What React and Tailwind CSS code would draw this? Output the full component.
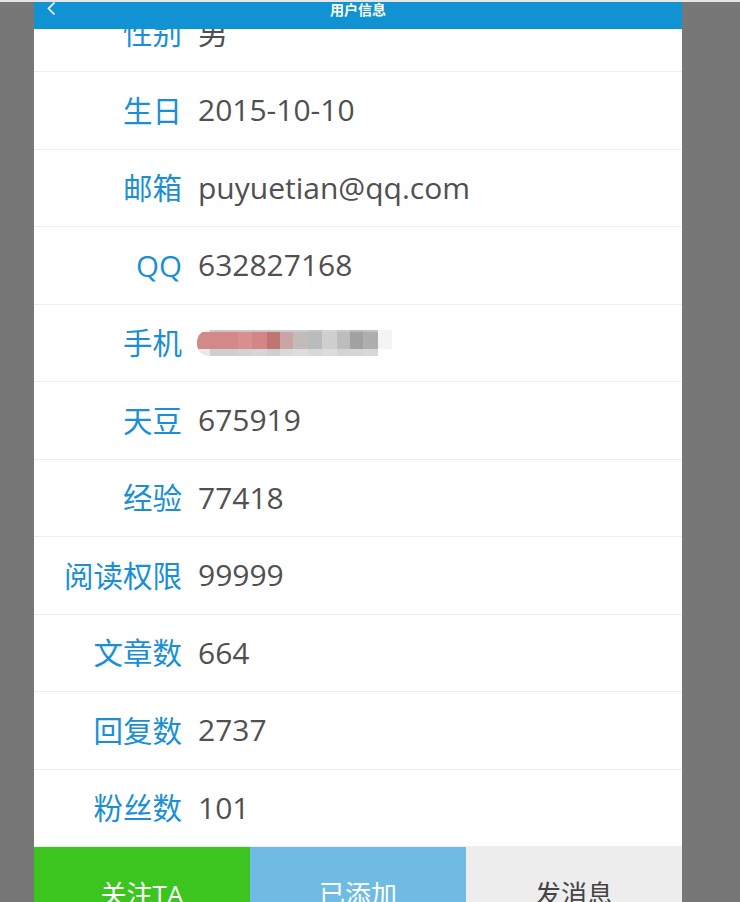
import React from "react";

const rows = [
  ["性别", "男"],
  ["生日", "2015-10-10"],
  ["邮箱", "puyuetian@qq.com"],
  ["QQ", "632827168"],
  ["手机", null],
  ["天豆", "675919"],
  ["经验", "77418"],
  ["阅读权限", "99999"],
  ["文章数", "664"],
  ["回复数", "2737"],
  ["粉丝数", "101"],
];

const mosaic = [
  { w: 13, top: "bg-[#ececec]", mid: "bg-[#d08a8a]", bot: "bg-[#e8e8e8]", first: true },
  { w: 28, top: "bg-[#c8c8c8]", mid: "bg-[#d48888]", bot: "bg-[#cfcfcf]" },
  { w: 14, top: "bg-[#c8c8c8]", mid: "bg-[#d98f8f]", bot: "bg-[#d2d2d2]" },
  { w: 15, top: "bg-[#c8c8c8]", mid: "bg-[#d48585]", bot: "bg-[#d6d6d6]" },
  { w: 13, top: "bg-[#c6c6c6]", mid: "bg-[#c07575]", bot: "bg-[#cfcfcf]" },
  { w: 13, top: "bg-[#cccccc]", mid: "bg-[#c9a5a5]", bot: "bg-[#dadada]" },
  { w: 15, top: "bg-[#cccccc]", mid: "bg-[#c3baba]", bot: "bg-[#dedede]" },
  { w: 14, top: "bg-[#c4c4c4]", mid: "bg-[#b8bcbe]", bot: "bg-[#d8d8d8]" },
  { w: 15, top: "bg-[#d4d4d4]", mid: "bg-[#cfcfcf]", bot: "bg-[#dcdcdc]" },
  { w: 13, top: "bg-[#c8c8c8]", mid: "bg-[#bdbdbd]", bot: "bg-[#d4d4d4]" },
  { w: 13, top: "bg-[#bcbcbc]", mid: "bg-[#a3a0a0]", bot: "bg-[#d6d6d6]" },
  { w: 15, top: "bg-[#c2c2c2]", mid: "bg-[#b0aeac]", bot: "bg-[#d8d8d8]" },
  { w: 14, top: "bg-[#f3f4f6]", mid: "bg-[#f3f4f6]", bot: "bg-white" },
];

function Mosaic() {
  return (
    <div className="flex ml-[15px] h-[26px]">
      {mosaic.map((m, i) => (
        <div
          key={i}
          className={"flex flex-col " + (m.first ? "rounded-l-[12px] overflow-hidden" : "")}
          style={{ width: m.w }}
        >
          <div className={"h-[2px] " + m.top} />
          <div className={"h-[17px] " + m.mid} />
          <div className={"h-[7px] " + m.bot} />
        </div>
      ))}
    </div>
  );
}

export default function App() {
  return (
    <div className="w-full h-[902px] overflow-hidden bg-[#777777] font-['Open_Sans','Noto_Sans_CJK_SC',sans-serif]">
      <div className="h-[2px] bg-[#e6e6e6]" />
      <div className="w-[648px] ml-[34px] bg-white">
        <div className="relative h-[27px] bg-[#1192d3] z-10">
          <svg className="absolute left-[12px] top-0" width="12" height="14" viewBox="0 0 12 14">
            <path d="M8.5 0.5 L2.5 6.5 L8.5 12.5" fill="none" stroke="white" strokeWidth="1.6" />
          </svg>
          <div className="text-center text-white font-bold text-[14px] leading-[14px] pt-0 font-['Noto_Sans_CJK_SC',sans-serif]">
            用户信息
          </div>
        </div>
        <div className="mt-[-34.5px]">
          {rows.map(([label, value], i) => (
            <div key={i} className="h-[77.5px] border-b border-[#ededed] flex items-center">
              <div className="w-[148px] text-right text-[29.5px] text-[#1a8fd5] leading-none">{label}</div>
              {value === null ? (
                <Mosaic />
              ) : (
                <div className="ml-[16px] text-[30px] text-[#505050] leading-none">{value}</div>
              )}
            </div>
          ))}
        </div>
        <div className="grid grid-cols-3 h-[94px] text-[26px] leading-none">
          <div className="bg-[#3cc51f] text-white flex items-center justify-center">关注TA</div>
          <div className="bg-[#6fbbe3] text-white flex items-center justify-center">已添加</div>
          <div className="bg-[#ededed] text-[#444444] flex items-center justify-center">发消息</div>
        </div>
      </div>
    </div>
  );
}
